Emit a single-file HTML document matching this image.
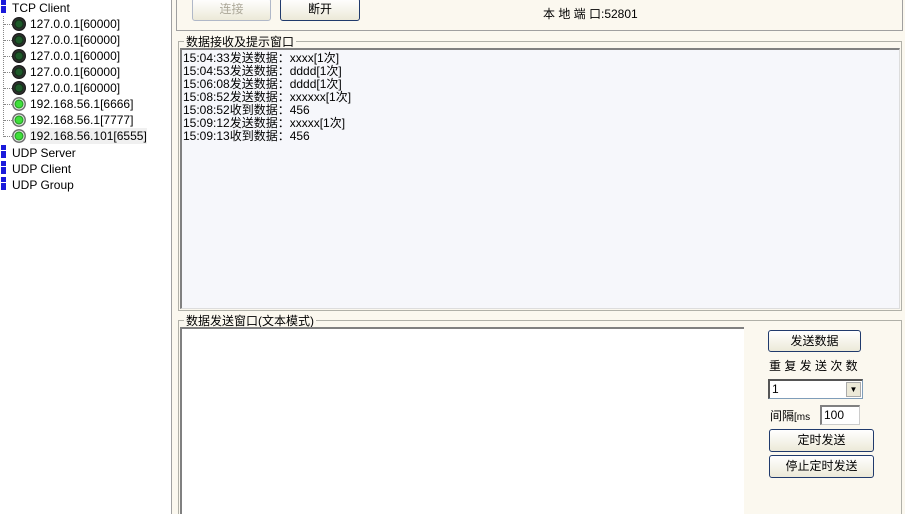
<!DOCTYPE html><html><head><meta charset="utf-8"><style>
*{margin:0;padding:0;box-sizing:border-box}
html,body{width:905px;height:514px;overflow:hidden}
body{background:#fbf8ef;font-family:"Liberation Sans","Noto Sans CJK SC",sans-serif;font-size:12px;color:#000;position:relative}
.a{position:absolute}
#left{left:0;top:0;width:172px;height:514px;background:#fff;border-right:1px solid #a0a0a0}
.row{position:absolute;left:0;height:16px;line-height:16px;white-space:nowrap;font-size:12px}
.sq{position:absolute;left:1px;width:5px;height:13px;background:repeating-linear-gradient(#1a1adb 0 5px,#fff 5px 6px,#1a1adb 6px 13px)}
.led{position:absolute;left:12px;top:1px;width:14px;height:14px;border-radius:50%;background:radial-gradient(circle,#1e5a2a 0 3px,#0f2a14 4px,#333 5px,#111 7px)}
.led.g{background:radial-gradient(circle,#3fe03a 0 3px,#1a8a1a 4px,#fff 5px,#555 6px,#999 7px)}
.btn{position:absolute;border:1px solid #203a6c;border-radius:3px;background:linear-gradient(#fff,#ece9d8);text-align:center;font-size:12px;line-height:20px}
</style></head><body>
<div id="left" class="a">
<div class="a" style="left:3px;top:16px;width:1px;height:121px;border-left:1px dotted #888"></div>
<div class="row" style="top:0"><span class="sq"></span><span style="position:absolute;left:12px">TCP Client</span></div>
<div class="row" style="top:16px;width:170px"><div class="a" style="left:4px;top:8px;width:8px;border-top:1px dotted #888"></div><span class="led"></span><span style="position:absolute;left:30px">127.0.0.1[60000]</span></div>
<div class="row" style="top:32px;width:170px"><div class="a" style="left:4px;top:8px;width:8px;border-top:1px dotted #888"></div><span class="led"></span><span style="position:absolute;left:30px">127.0.0.1[60000]</span></div>
<div class="row" style="top:48px;width:170px"><div class="a" style="left:4px;top:8px;width:8px;border-top:1px dotted #888"></div><span class="led"></span><span style="position:absolute;left:30px">127.0.0.1[60000]</span></div>
<div class="row" style="top:64px;width:170px"><div class="a" style="left:4px;top:8px;width:8px;border-top:1px dotted #888"></div><span class="led"></span><span style="position:absolute;left:30px">127.0.0.1[60000]</span></div>
<div class="row" style="top:80px;width:170px"><div class="a" style="left:4px;top:8px;width:8px;border-top:1px dotted #888"></div><span class="led"></span><span style="position:absolute;left:30px">127.0.0.1[60000]</span></div>
<div class="row" style="top:96px;width:170px"><div class="a" style="left:4px;top:8px;width:8px;border-top:1px dotted #888"></div><span class="led g"></span><span style="position:absolute;left:30px">192.168.56.1[6666]</span></div>
<div class="row" style="top:112px;width:170px"><div class="a" style="left:4px;top:8px;width:8px;border-top:1px dotted #888"></div><span class="led g"></span><span style="position:absolute;left:30px">192.168.56.1[7777]</span></div>
<div class="row" style="top:128px;width:170px"><div class="a" style="left:4px;top:8px;width:8px;border-top:1px dotted #888"></div><span class="led g"></span><span style="position:absolute;left:30px;background:#f0f0f0">192.168.56.101[6555]</span></div>
<div class="row" style="top:145px"><span class="sq"></span><span style="position:absolute;left:12px">UDP Server</span></div>
<div class="row" style="top:161px"><span class="sq"></span><span style="position:absolute;left:12px">UDP Client</span></div>
<div class="row" style="top:177px"><span class="sq"></span><span style="position:absolute;left:12px">UDP Group</span></div>
</div>
<div class="a" style="left:176px;top:-2px;width:727px;height:33px;border:1px solid #a0a0a0;border-top:none"></div>
<div class="btn" style="left:192px;top:-2px;width:79px;height:23px;color:#aca899;border-color:#b0b8c8">连接</div>
<div class="btn" style="left:280px;top:-2px;width:80px;height:23px">断开</div>
<div class="a" style="left:543px;top:5px;font-size:12px">本 地 端 口:52801</div>
<div class="a" style="left:178px;top:41px;width:724px;height:270px;border:1px solid #b0b0a8"></div>
<div class="a" style="left:184px;top:33px;background:#fbf8ef;padding:0 2px">数据接收及提示窗口</div>
<div class="a" style="left:180px;top:48px;width:720px;height:261px;background:#f6f7fb;border:1px solid #ddd;border-top:2px solid #808080;border-left:2px solid #808080;padding:2px 1px;line-height:13px;font-size:12px">
15:04:33发送数据：xxxx[1次]<br>15:04:53发送数据：dddd[1次]<br>15:06:08发送数据：dddd[1次]<br>15:08:52发送数据：xxxxxx[1次]<br>15:08:52收到数据：456<br>15:09:12发送数据：xxxxx[1次]<br>15:09:13收到数据：456</div>
<div class="a" style="left:178px;top:320px;width:724px;height:194px;border:1px solid #b0b0a8;border-bottom:none"></div>
<div class="a" style="left:184px;top:312px;background:#fbf8ef;padding:0 2px">数据发送窗口(文本模式)</div>
<div class="a" style="left:180px;top:327px;width:564px;height:187px;background:#fff;border-top:2px solid #808080;border-left:2px solid #808080"></div>
<div class="btn" style="left:768px;top:330px;width:93px;height:22px">发送数据</div>
<div class="a" style="left:769px;top:357px">重 复 发 送 次 数</div>
<div class="a" style="left:768px;top:379px;width:95px;height:20px;background:#fff;border:1px solid #7f9db9;border-top:2px solid #555;border-left:2px solid #555;padding-left:2px;line-height:16px">1<div class="a" style="right:1px;top:1px;width:15px;height:15px;background:#ece9d8;border:1px solid #aaa;font-size:8px;text-align:center;line-height:14px">▼</div></div>
<div class="a" style="left:770px;top:407px">间隔<span style="font-size:10px">[ms</span></div>
<div class="a" style="left:820px;top:405px;width:40px;height:20px;background:#fff;border:1px solid #ccc;border-top:2px solid #808080;border-left:2px solid #808080;padding-left:2px;line-height:16px">100</div>
<div class="btn" style="left:769px;top:429px;width:105px;height:23px">定时发送</div>
<div class="btn" style="left:769px;top:455px;width:105px;height:23px">停止定时发送</div>
</body></html>
